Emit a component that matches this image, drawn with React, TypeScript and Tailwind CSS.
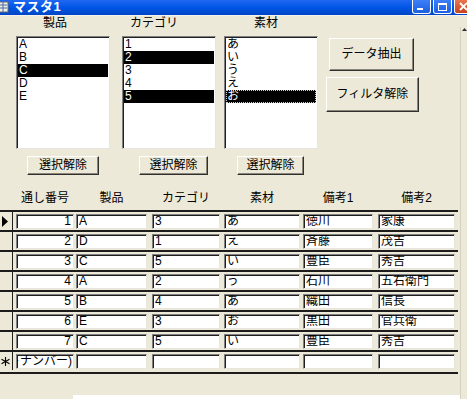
import React from 'react';

const font = "font-['Liberation_Sans','Noto_Sans_CJK_JP',sans-serif]";

const sunken =
  'bg-white border border-t-[#808080] border-l-[#808080] border-b-[#e8e6dc] border-r-[#e8e6dc] shadow-[inset_1px_1px_0_#202020]';

const raised =
  'bg-[#ece9d8] border border-t-white border-l-white border-b-[#303030] border-r-[#303030] shadow-[inset_-1px_-1px_0_#8a877a] flex items-center justify-center text-[12px] leading-[13px] text-black';

const cols = [
  { cls: 'ml-[3px] w-[58px]', head: '通し番号', right: true },
  { cls: 'ml-[2px] w-[71px]', head: '製品' },
  { cls: 'ml-[5px] w-[68px]', head: 'カテゴリ' },
  { cls: 'ml-[4px] w-[76px]', head: '素材' },
  { cls: 'ml-[3px] w-[70px]', head: '備考1' },
  { cls: 'ml-[5px] w-[77px]', head: '備考2' },
];

const rows = [
  ['1', 'A', '3', 'あ', '徳川', '家康'],
  ['2', 'D', '1', 'え', '斉藤', '茂吉'],
  ['3', 'C', '5', 'い', '豊臣', '秀吉'],
  ['4', 'A', '2', 'う', '石川', '五右衛門'],
  ['5', 'B', '4', 'あ', '織田', '信長'],
  ['6', 'E', '3', 'お', '黒田', '官兵衛'],
  ['7', 'C', '5', 'い', '豊臣', '秀吉'],
];

interface ListProps {
  items: string[];
  selected: number[];
  focus?: number;
  cls: string;
}

function ListBox({ items, selected, focus, cls }: ListProps) {
  return (
    <div className={`${sunken} ${cls} h-[113px] pt-[1px] pl-[1px] pr-[1px]`}>
      {items.map((it, i) => {
        const sel = selected.includes(i);
        return (
          <div
            key={i}
            className={`h-[13px] leading-[13px] text-[12px] pl-[1px] ${
              sel ? 'bg-black text-white' : 'text-black'
            } ${focus === i ? 'outline-1 outline-dotted outline-[#d0d0d0] -outline-offset-1' : ''}`}
          >
            {it}
          </div>
        );
      })}
    </div>
  );
}

function Selector({ kind }: { kind?: 'current' | 'new' }) {
  return (
    <div className="w-[13px] h-[18px] border-r border-[#202020] flex items-center justify-center">
      {kind === 'current' && (
        <svg width="7" height="11" viewBox="0 0 7 11" className="-ml-[2px]">
          <path d="M0 0 L6 5.5 L0 11 Z" fill="#000" />
        </svg>
      )}
      {kind === 'new' && (
        <svg width="9" height="9" viewBox="0 0 9 9" className="-ml-[1px]">
          <path d="M4.5 0 V9 M0.5 2.2 L8.5 6.8 M0.5 6.8 L8.5 2.2" stroke="#000" strokeWidth="1.1" />
        </svg>
      )}
    </div>
  );
}

export default function App() {
  return (
    <div className={`w-[467px] h-[399px] bg-[#ece9d8] overflow-hidden flex flex-col ${font}`}>
      {/* Title bar */}
      <div className="h-[15px] flex items-start bg-gradient-to-b from-[#1f68f2] via-[#0055e6] to-[#0046c6] overflow-hidden shrink-0">
        <svg width="10" height="12" viewBox="0 0 10 12" className="mt-[1px] -ml-[1px]">
          <rect x="0" y="1" width="9" height="10" fill="#f2f0e6" stroke="#6a6a6a" />
          <path d="M1 4 H8 M1 7 H8 M4 1 V11" stroke="#4a6aa0" />
        </svg>
        <span className="ml-[4px] text-white font-bold text-[13px] leading-[14px] tracking-[0.5px]">マスタ1</span>
        <div className="ml-auto flex gap-[2px] -mr-[6px] shrink-0">
          <div className="w-[19px] h-[14px] rounded-b-[3px] border border-t-0 border-white bg-gradient-to-b from-[#3c80f8] to-[#1d5fe0] flex items-end pb-[3px] pl-[4px]">
            <div className="w-[6px] h-[2px] bg-white" />
          </div>
          <div className="w-[19px] h-[14px] rounded-b-[3px] border border-t-0 border-white bg-gradient-to-b from-[#3c80f8] to-[#1d5fe0] flex items-center justify-center">
            <div className="w-[9px] h-[8px] border border-white border-t-2" />
          </div>
          <div className="w-[19px] h-[14px] rounded-b-[3px] border border-t-0 border-white bg-gradient-to-b from-[#e8754e] to-[#c8401c] flex items-center justify-center">
            <svg width="9" height="9" viewBox="0 0 9 9">
              <path d="M1 1 L8 8 M8 1 L1 8" stroke="#fff" strokeWidth="1.8" />
            </svg>
          </div>
        </div>
      </div>
      <div className="h-[1px] bg-[#f4f2ea] shrink-0" />

      <div className="flex flex-1">
        {/* Main form */}
        <div className="w-[460px] flex flex-col">
          {/* list labels */}
          <div className="h-[20px] flex items-start pt-[1px] text-[12px] leading-[13px] text-black">
            <div className="ml-[31px] w-[48px] text-center">製品</div>
            <div className="ml-[51px] w-[48px] text-center">カテゴリ</div>
            <div className="ml-[64px] w-[48px] text-center">素材</div>
          </div>

          {/* list boxes and action buttons */}
          <div className="flex items-start">
            <ListBox cls="ml-[16px] w-[94px]" items={['A', 'B', 'C', 'D', 'E']} selected={[2]} />
            <ListBox cls="ml-[12px] w-[94px]" items={['1', '2', '3', '4', '5']} selected={[1, 4]} />
            <ListBox cls="ml-[8px] w-[94px]" items={['あ', 'い', 'う', 'え', 'お']} selected={[4]} focus={4} />
            <div className="flex flex-col">
              <div className={`${raised} ml-[11px] mt-[2px] w-[85px] h-[33px]`}>データ抽出</div>
              <div className={`${raised} ml-[8px] mt-[6px] w-[93px] h-[35px]`}>フィルタ解除</div>
            </div>
          </div>

          {/* clear selection buttons */}
          <div className="flex mt-[7px]">
            <div className={`${raised} ml-[27px] w-[72px] h-[19px]`}>選択解除</div>
            <div className={`${raised} ml-[40px] w-[69px] h-[19px]`}>選択解除</div>
            <div className={`${raised} ml-[29px] w-[67px] h-[19px]`}>選択解除</div>
          </div>

          {/* column headers */}
          <div className="h-[35px] flex items-end pb-[5px] text-[12px] leading-[13px] text-black">
            <div className="w-[13px]" />
            {cols.map((c) => (
              <div key={c.head} className={`${c.cls} text-center`}>
                {c.head}
              </div>
            ))}
          </div>

          {/* datasheet rows */}
          {rows.map((r, i) => (
            <div key={i} className="w-[458px] h-[20px] border-t-2 border-[#1c1c1c] flex items-start">
              <Selector kind={i === 0 ? 'current' : undefined} />
              {cols.map((c, j) => (
                <div
                  key={j}
                  className={`${sunken} ${c.cls} mt-[2px] h-[15px] text-[12px] leading-[12px] px-[2px] overflow-hidden whitespace-nowrap text-black ${
                    c.right ? 'text-right' : ''
                  }`}
                >
                  {r[j]}
                </div>
              ))}
            </div>
          ))}
          <div className="w-[458px] h-[20px] border-t-2 border-b-2 border-[#1c1c1c] box-content flex items-start">
            <Selector kind="new" />
            {cols.map((c, j) => (
              <div
                key={j}
                className={`${sunken} ${c.cls} mt-[2px] h-[15px] text-[12px] leading-[12px] px-[1px] overflow-hidden whitespace-nowrap text-black flex justify-end`}
              >
                {j === 0 ? '(オートナンバー)' : ''}
              </div>
            ))}
          </div>

          <div className="flex-1" />
          <div className="ml-[73px] h-[4px] bg-white" />
        </div>

        {/* vertical scroll bar edge */}
        <div className="w-[7px] flex flex-col items-center border-l border-[#d6d2c2] mt-[11px]">
          <svg width="5" height="3" viewBox="0 0 5 3" className="mt-[1px]">
            <path d="M2.5 0 L5 3 L0 3 Z" fill="#303030" />
          </svg>
        </div>
      </div>
    </div>
  );
}
